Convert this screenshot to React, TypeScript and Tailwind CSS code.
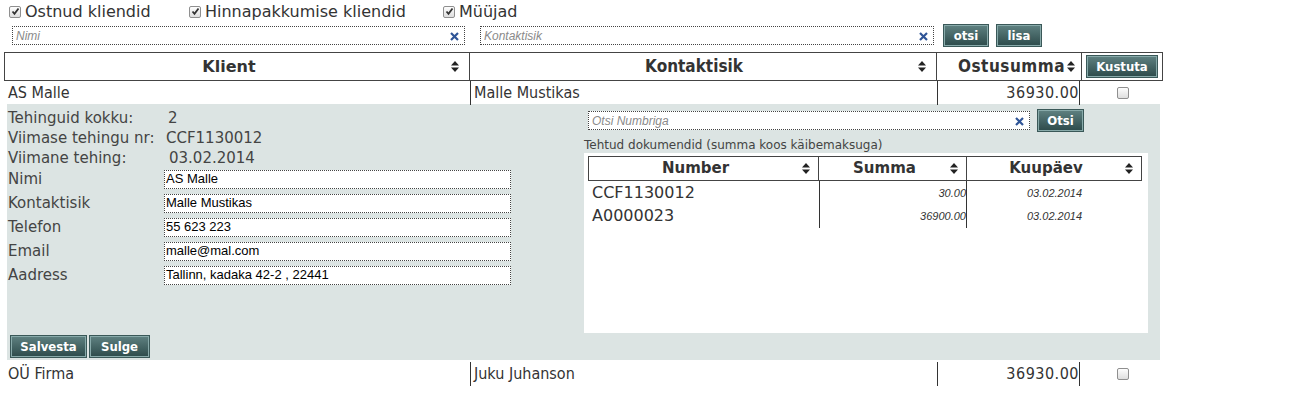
import React from 'react';

const wide = { fontFamily: '"DejaVu Sans", Verdana, sans-serif' };
const narrow = { fontFamily: '"DejaVu Sans Condensed", "Liberation Sans Narrow", sans-serif' };
const arial = { fontFamily: '"Liberation Sans", Arial, sans-serif' };

function SortIcon() {
  return (
    <svg width="8" height="11" viewBox="0 0 8 11" className="shrink-0">
      <path d="M4 0 L8 4.5 H0 Z" fill="#222" />
      <path d="M4 11 L8 6.5 H0 Z" fill="#222" />
    </svg>
  );
}

function Check({ checked }: { checked?: boolean }) {
  return (
    <span className="inline-flex items-center justify-center w-[12px] h-[12px] rounded-[2px] border border-[#8f8f8f] bg-gradient-to-b from-[#fdfdfd] to-[#dedede] shrink-0">
      {checked && (
        <svg width="9" height="9" viewBox="0 0 9 9">
          <path d="M1.5 4.5 L3.5 6.8 L7.5 1.5" stroke="#333" strokeWidth="1.8" fill="none" />
        </svg>
      )}
    </span>
  );
}

function Btn({ children, className = '' }: { children: React.ReactNode; className?: string }) {
  return (
    <button
      style={narrow}
      className={`h-[21px] px-2 text-[13px] font-bold text-white bg-gradient-to-b from-[#5d7f7f] to-[#2f4d4d] border border-[#8aa] shadow-[0_0_0_1px_#3a5858] leading-none ${className}`}
    >
      {children}
    </button>
  );
}

function SearchBox({ placeholder, className = '' }: { placeholder: string; className?: string }) {
  return (
    <div className={`h-[19px] flex items-center bg-white border border-dotted border-[#444] ${className}`}>
      <span style={arial} className="flex-1 pl-[3px] text-[12px] italic text-[#8a8a8a]">{placeholder}</span>
      <svg width="9" height="9" viewBox="0 0 9 9" className="mr-[5px] mt-[2px]">
        <path d="M1 1 L8 8 M8 1 L1 8" stroke="#2f5597" strokeWidth="2.2" />
      </svg>
    </div>
  );
}

function Field({ value }: { value: string }) {
  return (
    <div style={arial} className="w-[347px] h-[19px] flex items-center pl-[1px] bg-white border border-dotted border-[#444] text-[13px] text-black">
      {value}
    </div>
  );
}

function ClientRow({ name, contact, sum }: { name: string; contact: string; sum: string }) {
  return (
    <div style={narrow} className="grid grid-cols-[466px_467px_145px_81px] h-[23px] text-[16px] text-[#333] items-center">
      <div className="pl-[4px]">{name}</div>
      <div className="pl-[3px] border-l border-[#333] h-full flex items-center">{contact}</div>
      <div className="pr-[2px] border-l border-[#333] h-full flex items-center justify-end">
        <span className="border-r border-[#333] tracking-[0.5px]">{sum}</span>
      </div>
      <div className="flex items-center justify-center pl-[1px]">
        <Check />
      </div>
    </div>
  );
}

export default function App() {
  const fields = [
    ['Nimi', 'AS Malle'],
    ['Kontaktisik', 'Malle Mustikas'],
    ['Telefon', '55 623 223'],
    ['Email', 'malle@mal.com'],
    ['Aadress', 'Tallinn, kadaka 42-2 , 22441'],
  ];
  const docs = [
    ['CCF1130012', '30.00', '03.02.2014'],
    ['A0000023', '36900.00', '03.02.2014'],
  ];

  return (
    <div className="w-[1300px] h-[400px] bg-white text-[#333] overflow-hidden">
      {/* filtrid */}
      <div style={wide} className="flex items-center h-[23px] pl-[9px] text-[16px] text-[#333]">
        <label className="flex items-center gap-[4px] w-[180px]"><Check checked />Ostnud kliendid</label>
        <label className="flex items-center gap-[4px] w-[254px]"><Check checked />Hinnapakkumise kliendid</label>
        <label className="flex items-center gap-[4px]"><Check checked />Müüjad</label>
      </div>

      {/* otsing */}
      <div className="flex items-center h-[25px] pl-[12px]">
        <SearchBox placeholder="Nimi" className="w-[453px]" />
        <SearchBox placeholder="Kontaktisik" className="w-[454px] ml-[15px]" />
        <Btn className="ml-[10px] w-[44px]">otsi</Btn>
        <Btn className="ml-[9px] w-[44px]">lisa</Btn>
      </div>

      {/* tabel */}
      <div className="ml-[4px] mt-[4px] w-[1159px]">
        <div style={narrow} className="grid grid-cols-[466px_467px_145px_81px] h-[29px] text-[#333]">
          <div style={wide} className="flex items-center border border-[#444] pl-[2px] pr-[10px] text-[16px] font-bold">
            <span className="flex-1 text-center">Klient</span>
            <SortIcon />
          </div>
          <div className="flex items-center border-y border-r border-[#444] pr-[10px] text-[17px] font-bold">
            <span className="flex-1 text-center">Kontaktisik</span>
            <SortIcon />
          </div>
          <div className="flex items-center justify-end border-y border-r border-[#444] pr-[6px] gap-[2px] text-[17px] font-semibold">
            <span className="tracking-[0.5px]">Ostusumma</span>
            <SortIcon />
          </div>
          <div className="flex items-center justify-center border-y border-r border-[#444]">
            <Btn className="w-[70px]">Kustuta</Btn>
          </div>
        </div>

        <ClientRow name="AS Malle" contact="Malle Mustikas" sum="36930.00" />

        {/* detailid */}
        <div className="ml-[3px] w-[1153px] h-[256px] bg-[#dce4e3] flex flex-col">
          <div className="flex flex-1">
            <div style={wide} className="w-[577px] pl-[1px] pt-[4px] text-[15px] text-[#444]">
              <div className="grid grid-cols-[160px_1fr] leading-[20px]">
                <span>Tehinguid kokku:</span><span>2</span>
                <span>Viimase tehingu nr:</span><span className="-ml-[2px]">CCF1130012</span>
                <span>Viimane tehing:</span><span className="ml-[1px]">03.02.2014</span>
              </div>
              <div className="flex flex-col gap-[4px] mt-[1px]">
                {fields.map(([label, value]) => (
                  <div key={label} className="flex items-center h-[20px]">
                    <span className="w-[156px]">{label}</span>
                    <Field value={value} />
                  </div>
                ))}
              </div>
            </div>

            <div className="flex flex-col w-[564px] pt-[6px]">
              <div className="flex items-center pl-[4px]">
                <SearchBox placeholder="Otsi Numbriga" className="w-[442px]" />
                <Btn className="ml-[8px] w-[45px]">Otsi</Btn>
              </div>
              <div style={wide} className="mt-[6px] text-[12px] text-[#444] leading-[16px]">
                Tehtud dokumendid (summa koos käibemaksuga)
              </div>
              <div className="bg-white h-[180px] pt-[3px] px-[4px]">
                <div style={wide} className="grid grid-cols-[231px_148px_175px] h-[23px] text-[15px] font-bold text-[#333]">
                  <div className="flex items-center border border-[#444] pr-[8px]">
                    <span className="flex-1 text-center">Number</span><SortIcon />
                  </div>
                  <div className="flex items-center border-y border-r border-[#444] pr-[8px]">
                    <span className="flex-1 text-center">Summa</span><SortIcon />
                  </div>
                  <div className="flex items-center border-y border-r border-[#444] pr-[8px]">
                    <span className="flex-1 text-center">Kuupäev</span><SortIcon />
                  </div>
                </div>
                <div className="flex flex-col gap-[3px] mt-[2px]">
                  {docs.map(([no, sum, date]) => (
                    <div key={no} className="grid grid-cols-[231px_148px_175px] h-[20px] items-center">
                      <span style={wide} className="pl-[4px] text-[16px] text-[#333]">{no}</span>
                      <span style={arial} className="h-full flex items-center justify-end border-l border-[#333] text-[11px] italic text-[#333]">
                        <span className="border-r border-[#333] h-full flex items-center">{sum}</span>
                      </span>
                      <span style={arial} className="text-center text-[11px] italic text-[#333]">{date}</span>
                    </div>
                  ))}
                </div>
              </div>
            </div>
          </div>
          <div className="flex gap-[4px] pl-[4px] pb-[3px]">
            <Btn className="w-[75px]">Salvesta</Btn>
            <Btn className="w-[59px]">Sulge</Btn>
          </div>
        </div>

        <div className="mt-[2px]">
          <ClientRow name="OÜ Firma" contact="Juku Juhanson" sum="36930.00" />
        </div>
      </div>
    </div>
  );
}
